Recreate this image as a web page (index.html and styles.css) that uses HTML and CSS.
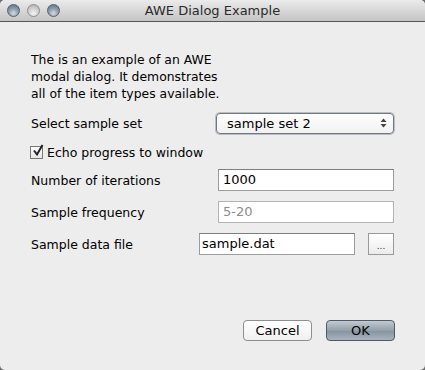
FILE: index.html
```html
<!DOCTYPE html>
<html lang="en">
<head>
    <meta charset="UTF-8">
    <meta name="viewport" content="width=device-width, initial-scale=1.0">
    <title>AWE Dialog Example</title>
    <link rel="stylesheet" href="styles.css">
</head>
<body>
    <div class="window">
        <div class="titlebar">
            <div class="lights">
                <span class="light"></span>
                <span class="light light-off"></span>
                <span class="light"></span>
            </div>
            <div class="title">AWE Dialog Example</div>
        </div>

        <div class="content">
            <p class="intro">The is an example of an AWE<br>modal dialog. It demonstrates<br>all of the item types available.</p>

            <div class="row">
                <label class="label">Select sample set</label>
                <div class="select">
                    <span>sample set 2</span>
                    <svg class="arrows" width="7" height="10" viewBox="0 0 7 10">
                        <path d="M3.5 0.5 L6.5 4 L0.5 4 Z" fill="#444"/>
                        <path d="M3.5 9.5 L6.5 6 L0.5 6 Z" fill="#444"/>
                    </svg>
                </div>
            </div>

            <div class="row row-check">
                <span class="checkbox">
                    <svg width="14" height="14" viewBox="0 0 14 14">
                        <path d="M3 6.5 L6 10.5 L11.5 1" fill="none" stroke="#222" stroke-width="2"/>
                    </svg>
                </span>
                <label class="label">Echo progress to window</label>
            </div>

            <div class="row">
                <label class="label">Number of iterations</label>
                <div class="field">1000</div>
            </div>

            <div class="row">
                <label class="label">Sample frequency</label>
                <div class="field field-disabled">5-20</div>
            </div>

            <div class="row">
                <label class="label">Sample data file</label>
                <div class="field field-file">sample.dat</div>
                <div class="browse">...</div>
            </div>
        </div>

        <div class="footer">
            <div class="button">Cancel</div>
            <div class="button button-default">OK</div>
        </div>
    </div>
</body>
</html>
```

FILE: styles.css
```css
html, body {
    margin: 0;
    height: 100%;
    background-color: #6e6e6e;
}

body {
    font-family: "DejaVu Sans", sans-serif;
    font-size: 12.5px;
    color: #000;
}

.window {
    height: 370px;
    display: flex;
    flex-direction: column;
    background-color: #ededed;
    border-radius: 5px;
    overflow: hidden;
}

.titlebar {
    height: 21px;
    position: relative;
    background: linear-gradient(#ebebeb, #c4c4c4);
    border-bottom: 1px solid #575757;
}

.lights {
    display: flex;
    gap: 7px;
    padding: 4px 0 0 7px;
}

.light {
    width: 13px;
    height: 13px;
    border-radius: 50%;
    box-sizing: border-box;
    border: 1px solid #56606b;
    background: radial-gradient(circle at 50% 75%, #d5dee6 0%, #8fa0b0 45%, #5c6c7c 100%);
}

.light-off {
    border-color: #8e8e8e;
    background: radial-gradient(circle at 50% 75%, #f4f4f4 0%, #cfcfcf 50%, #a9a9a9 100%);
}

.title {
    position: absolute;
    top: 0;
    left: 0;
    right: 0;
    line-height: 21px;
    text-align: center;
    font-size: 13px;
    color: #2b2b2b;
    pointer-events: none;
}

.content {
    padding: 29px 31px 0 31px;
}

.intro {
    margin: 0;
    line-height: 17px;
    font-size: 12.4px;
}

.row {
    display: flex;
    align-items: center;
    height: 22px;
    margin-top: 10px;
}

.row-check {
    height: 20px;
    margin-top: 8px;
    margin-bottom: -3px;
}

.label {
    flex: 1;
}

.select {
    width: 178px;
    height: 21px;
    box-sizing: border-box;
    display: flex;
    align-items: center;
    justify-content: space-between;
    padding: 0 6px 0 10px;
    border: 1px solid #6f7780;
    border-radius: 4px;
    background: linear-gradient(#ffffff, #f1f1f1);
    box-shadow: 0 0 0 1px #b9bec4;
    font-size: 13px;
}

.checkbox {
    width: 13px;
    height: 13px;
    box-sizing: border-box;
    margin: 0 4px 0 -1px;
    border: 1px solid #777;
    background: linear-gradient(#ffffff, #e6e6e6);
    position: relative;
}

.checkbox svg {
    position: absolute;
    left: 0;
    top: -3px;
}

.field {
    width: 176px;
    height: 22px;
    box-sizing: border-box;
    padding: 0 4px;
    line-height: 20px;
    border: 1px solid #9c9c9c;
    border-top-color: #7e7e7e;
    background-color: #fff;
    font-size: 13px;
}

.field-disabled {
    color: #8c8c8c;
    border-color: #b4b4b4;
}

.field-file {
    width: 156px;
    padding-left: 2px;
}

.browse {
    width: 26px;
    height: 22px;
    box-sizing: border-box;
    margin-left: 13px;
    border: 1px solid #9a9a9a;
    background: linear-gradient(#ffffff, #ececec);
    text-align: center;
    line-height: 24px;
    font-size: 9px;
    color: #333;
}

.footer {
    margin-top: auto;
    display: flex;
    justify-content: flex-end;
    gap: 14px;
    padding: 0 30px 29px 0;
}

.button {
    width: 69px;
    height: 21px;
    box-sizing: border-box;
    border: 1px solid #8f8f8f;
    border-radius: 4px;
    background: linear-gradient(#ffffff, #f0f0f0);
    text-align: center;
    line-height: 19px;
    font-size: 13px;
}

.button-default {
    border-color: #4e5a66;
    background: linear-gradient(#c2cad2, #939faa 50%, #85929f 51%, #a8b3bd);
}
```
